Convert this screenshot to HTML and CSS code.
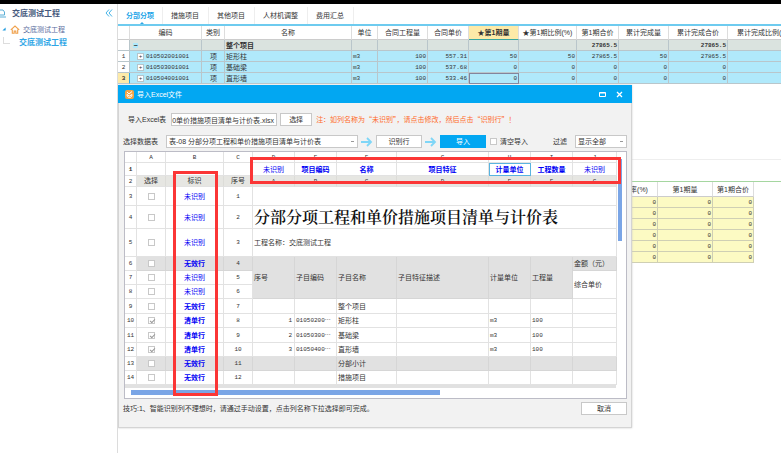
FILE: index.html
```html
<!DOCTYPE html>
<html lang="zh-CN">
<head>
    <meta charset="UTF-8">
    <meta name="viewport" content="width=device-width, initial-scale=1.0">
    <title>导入Excel文件</title>
    <link rel="stylesheet" href="styles.css">
</head>
<body>
    <div class="top-strip"></div>
    <div class="app">
        <aside class="sidebar">
            <div class="side-head">
                <svg class="side-icon" viewBox="0 0 8 9"><path d="M0 1h3l1.500 2v3H0M0 8h6" fill="none" stroke="#5aaed6"/></svg>
                <span class="side-title">交底测试工程</span>
                <button class="collapse" aria-label="收起"><svg viewBox="0 0 8 8"><path d="M4 0.500L1 4l3 3.500M7 0.500L4 4l3 3.500" fill="none" stroke="#45b4e8"/></svg></button>
            </div>
            <div class="side-row">
                <svg class="twisty" viewBox="0 0 5 5"><path d="M4.500 0.500v4h-4z" fill="#1e9be0"/></svg>
                <svg class="house" viewBox="0 0 10 9"><path d="M0.800 4.800L5 1l4.200 3.800M2.300 4.500v3.700h1.900V6h1.600v2.200h1.900V4.500" fill="none" stroke="#f0a04a" stroke-width="1.100"/></svg>
                <span>交底测试工程</span>
            </div>
            <div class="side-row leaf">
                <a href="#">交底测试工程</a>
            </div>
        </aside>

        <main class="main">
            <nav class="tabs">
                <button class="tab active">分部分项</button>
                <button class="tab">措施项目</button>
                <button class="tab">其他项目</button>
                <button class="tab">人材机调整</button>
                <button class="tab">费用汇总</button>
            </nav>

            <table class="bill">
                <colgroup>
                    <col class="w12"><col class="w72"><col class="w23"><col class="w127"><col class="w26"><col class="w50"><col class="w41"><col class="w50"><col class="w58"><col class="w42"><col class="w50"><col class="w59"><col class="w72">
                </colgroup>
                <thead>
                    <tr><th></th><th>编码</th><th>类别</th><th>名称</th><th>单位</th><th>合同工程量</th><th>合同单价</th><th class="current">★第1期量</th><th>★第1期比例(%)</th><th>第1期合价</th><th>累计完成量</th><th>累计完成合价</th><th>累计完成比例(%)</th></tr>
                </thead>
                <tbody>
                    <tr class="total"><td class="no"></td><td><span class="minus">−</span></td><td></td><td>整个项目</td><td></td><td></td><td></td><td></td><td></td><td class="num">27865.5</td><td></td><td class="num">27865.5</td><td></td></tr>
                    <tr><td class="no">1</td><td class="code"><span class="plus">+</span>010502001001</td><td class="kind">项</td><td>矩形柱</td><td class="unit">m3</td><td class="num">100</td><td class="num">557.31</td><td class="num">50</td><td class="num">50</td><td class="num">27865.5</td><td class="num">50</td><td class="num">27865.5</td><td></td></tr>
                    <tr><td class="no">2</td><td class="code"><span class="plus">+</span>010503001001</td><td class="kind">项</td><td>基础梁</td><td class="unit">m3</td><td class="num">100</td><td class="num">537.68</td><td class="num">0</td><td class="num">0</td><td class="num">0</td><td class="num">0</td><td class="num">0</td><td></td></tr>
                    <tr><td class="no here">3</td><td class="code"><span class="plus">+</span>010504001001</td><td class="kind">项</td><td>直形墙</td><td class="unit">m3</td><td class="num">100</td><td class="num">533.46</td><td class="num focus">0</td><td class="num">0</td><td class="num">0</td><td class="num">0</td><td class="num">0</td><td></td></tr>
                </tbody>
            </table>

            <section class="detail">
                <div class="detail-bar"></div>
                <table class="detail-table">
                    <colgroup><col><col class="w44"><col class="w55"><col class="w41"></colgroup>
                    <thead><tr><th></th><th>费率(%)</th><th>第1期量</th><th>第1期合价</th></tr></thead>
                    <tbody>
                        <tr><td></td><td>0</td><td>0</td><td>0</td></tr>
                        <tr><td></td><td>0</td><td>0</td><td>0</td></tr>
                        <tr><td></td><td>0</td><td>0</td><td>0</td></tr>
                        <tr><td></td><td>0</td><td>0</td><td>0</td></tr>
                        <tr><td></td><td>0</td><td>0</td><td>0</td></tr>
                        <tr><td></td><td>0</td><td>0</td><td>0</td></tr>
                    </tbody>
                </table>
            </section>

            <div class="dialog" role="dialog" aria-labelledby="dialog-title">
                <header class="title-bar">
                    <svg class="logo" viewBox="0 0 9 9"><rect width="9" height="9" rx="2" fill="#f5a545"/><path d="M2 2l2 2 3-2.500M2 4.500c0 4 5 4 5 0L4.500 6z" fill="none" stroke="#fff"/></svg>
                    <span id="dialog-title">导入Excel文件</span>
                    <button class="win-btn" aria-label="最大化"><svg viewBox="0 0 7 7"><path d="M0.500 1.500h6v4h-6zM0.500 2h6" fill="none" stroke="#fff"/></svg></button>
                    <button class="win-btn" aria-label="关闭"><svg viewBox="0 0 7 7"><path d="M1 1l5 5M6 1L1 6" fill="none" stroke="#fff" stroke-width="1.300"/></svg></button>
                </header>

                <div class="form-row file-row">
                    <label for="file">导入Excel表</label>
                    <input type="text" id="file" value="0单价措施项目清单与计价表.xlsx">
                    <button class="btn pick">选择</button>
                    <span class="note">注：如列名称为“未识别”，请点击修改，然后点击“识别行”！</span>
                </div>

                <div class="form-row sheet-row">
                    <label for="sheet">选择数据表</label>
                    <select id="sheet"><option>表-08 分部分项工程和单价措施项目清单与计价表</option></select>
                    <svg class="arrow" viewBox="0 0 12 10"><path d="M0 5h10M6 1l4 4-4 4" fill="none" stroke="#7fd6f7" stroke-width="1.800"/></svg>
                    <button class="btn">识别行</button>
                    <svg class="arrow" viewBox="0 0 12 10"><path d="M0 5h10M6 1l4 4-4 4" fill="none" stroke="#7fd6f7" stroke-width="1.800"/></svg>
                    <button class="btn primary">导入</button>
                    <input type="checkbox" id="clear"><label for="clear">清空导入</label>
                    <label class="filter-label" for="filter">过滤</label>
                    <select id="filter"><option>显示全部</option></select>
                </div>

                <div class="sheet-box">
                    <div class="sheet-view">
                        <table class="sheet">
                            <colgroup>
                                <col class="w12"><col class="w29"><col class="w58"><col class="w29"><col class="w42"><col class="w42"><col class="w60"><col class="w92"><col class="w42"><col class="w42"><col class="w44">
                            </colgroup>
                            <thead>
                                <tr class="h11"><th></th><th>A</th><th>B</th><th>C</th><th>D</th><th>E</th><th>F</th><th>G</th><th>H</th><th>I</th><th>J</th></tr>
                            </thead>
                            <tbody>
                                <tr class="h13 names"><th>1</th><td></td><td></td><td></td><td class="raw">未识别</td><td>项目编码</td><td>名称</td><td>项目特征</td><td class="picked">计量单位</td><td>工程数量</td><td class="raw">未识别</td></tr>
                                <tr class="h11 heads"><th>2</th><td>选择</td><td>标识</td><td>序号</td><td>A</td><td>B</td><td>C</td><td>D</td><td>E</td><td>F</td><td>G</td></tr>
                                <tr class="h19"><th>3</th><td><input type="checkbox" aria-label="第1行"></td><td class="mark raw">未识别</td><td class="seq">1</td><td colspan="7"></td></tr>
                                <tr class="h23"><th>4</th><td><input type="checkbox" aria-label="第2行"></td><td class="mark raw">未识别</td><td class="seq">2</td><td class="big" colspan="7">分部分项工程和单价措施项目清单与计价表</td></tr>
                                <tr class="h28"><th>5</th><td><input type="checkbox" aria-label="第3行"></td><td class="mark raw">未识别</td><td class="seq">3</td><td class="left" colspan="7">工程名称：交底测试工程</td></tr>
                                <tr class="h14"><th>6</th><td class="grey"><input type="checkbox" aria-label="第4行"></td><td class="mark grey">无效行</td><td class="seq grey">4</td><td class="left grey" rowspan="3">序号</td><td class="left grey" rowspan="3">子目编码</td><td class="left grey" rowspan="3">子目名称</td><td class="left grey" rowspan="3">子目特征描述</td><td class="left grey" rowspan="3">计量单位</td><td class="left grey" rowspan="3">工程量</td><td class="left grey">金额（元）</td></tr>
                                <tr class="h14"><th>7</th><td><input type="checkbox" aria-label="第5行"></td><td class="mark raw">未识别</td><td class="seq">5</td><td class="left" rowspan="2">综合单价</td></tr>
                                <tr class="h14"><th>8</th><td><input type="checkbox" aria-label="第6行"></td><td class="mark raw">未识别</td><td class="seq">6</td></tr>
                                <tr class="h15"><th>9</th><td><input type="checkbox" aria-label="第7行"></td><td class="mark">无效行</td><td class="seq">7</td><td></td><td></td><td class="left">整个项目</td><td></td><td></td><td></td><td></td></tr>
                                <tr class="h14"><th>10</th><td><input type="checkbox" checked aria-label="第8行"></td><td class="mark">清单行</td><td class="seq">8</td><td class="num">1</td><td class="cut">01050200⋯</td><td class="left">矩形柱</td><td></td><td class="val">m3</td><td class="val">100</td><td></td></tr>
                                <tr class="h15"><th>11</th><td><input type="checkbox" checked aria-label="第9行"></td><td class="mark">清单行</td><td class="seq">9</td><td class="num">2</td><td class="cut">01050300⋯</td><td class="left">基础梁</td><td></td><td class="val">m3</td><td class="val">100</td><td></td></tr>
                                <tr class="h14"><th>12</th><td><input type="checkbox" checked aria-label="第10行"></td><td class="mark">清单行</td><td class="seq">10</td><td class="num">3</td><td class="cut">01050400⋯</td><td class="left">直形墙</td><td></td><td class="val">m3</td><td class="val">100</td><td></td></tr>
                                <tr class="h14 shade"><th>13</th><td><input type="checkbox" aria-label="第11行"></td><td class="mark">无效行</td><td class="seq">11</td><td></td><td></td><td class="left">分部小计</td><td></td><td></td><td></td><td></td></tr>
                                <tr class="h14"><th>14</th><td><input type="checkbox" aria-label="第12行"></td><td class="mark">无效行</td><td class="seq">12</td><td></td><td></td><td class="left">措施项目</td><td></td><td></td><td></td><td></td></tr>
                            </tbody>
                        </table>
                        <div class="v-scroll"><div class="v-thumb"></div></div>
                    </div>
                    <div class="sliver"></div>
                    <div class="h-scroll"><div class="h-thumb"></div></div>
                    <div class="callout callout-names"></div>
                    <div class="callout callout-marks"></div>
                </div>

                <footer class="dialog-foot">
                    <span>技巧:1、智能识别列不理想时，请通过手动设置，点击列名称下拉选择即可完成。</span>
                    <button class="btn">取消</button>
                </footer>
            </div>
        </main>
    </div>
</body>
</html>
```
FILE: styles.css
```css
* {
    box-sizing: border-box;
}
body {
    margin: 0;
    min-height: 100vh;
    display: flex;
    flex-direction: column;
    overflow: hidden;
    font-family: "Liberation Sans", "Noto Sans CJK SC", sans-serif;
    font-size: 7px;
    line-height: 9px;
    color: #333;
    background: #fff;
}
button, input, select {
    font: inherit;
    color: inherit;
    margin: 0;
    padding: 0;
}
button {
    border: none;
    background: none;
    white-space: nowrap;
}
svg {
    display: block;
    flex: none;
}
.top-strip {
    height: 4px;
    background: #000;
}
.app {
    flex: 1;
    display: flex;
}

/* project tree */
.sidebar {
    width: 118px;
    flex: none;
    border-right: 1px solid #dcdcdc;
}
.side-head, .side-row {
    display: flex;
    align-items: center;
}
.side-head {
    height: 18px;
    padding-right: 4px;
    font-size: 8px;
    font-weight: bold;
    color: #46597d;
}
.side-icon {
    width: 8px;
    height: 9px;
    margin-right: 4px;
}
.collapse {
    margin-left: auto;
}
.collapse svg {
    width: 8px;
    height: 8px;
}
.side-row {
    height: 14px;
    padding-left: 2px;
    color: #586b9c;
}
.twisty {
    width: 4px;
    height: 4px;
    margin-right: 4px;
}
.house {
    width: 10px;
    height: 9px;
    margin-right: 3px;
}
.leaf {
    height: 13px;
    padding-left: 3px;
}
.leaf::before {
    content: "";
    width: 6px;
    height: 6px;
    margin: 0 9px 4px 0;
    border-left: 1px solid #ddd;
    border-bottom: 1px solid #ddd;
}
.leaf a {
    font-size: 8px;
    font-weight: bold;
    color: #2fa6e6;
    text-decoration: none;
}

/* main area */
.main {
    flex: 1;
    min-width: 0;
    position: relative;
    overflow: hidden;
}
.tabs {
    display: flex;
    height: 22px;
    padding-top: 3px;
    border-bottom: 2px solid #6ecbef;
}
.tab {
    padding: 0 9px 0 8px;
    border-right: 1px solid #eee;
}
.tab.active {
    position: relative;
    padding: 0 8px;
    color: #1ea5e8;
    font-weight: bold;
}
.tab.active::after {
    content: "";
    position: absolute;
    left: 50%;
    bottom: 0;
    border: 2px solid transparent;
    border-top: 0;
    border-bottom-color: #2fa6e6;
}
table {
    table-layout: fixed;
    border-spacing: 0;
    width: 0;
    white-space: nowrap;
}
th, td {
    padding: 0;
    overflow: hidden;
    line-height: 9px;
}
th {
    font-weight: normal;
}
.w12 { width: 12px; }
.w23 { width: 23px; }
.w26 { width: 26px; }
.w29 { width: 29px; }
.w41 { width: 41px; }
.w42 { width: 42px; }
.w44 { width: 44px; }
.w50 { width: 50px; }
.w55 { width: 55px; }
.w58 { width: 58px; }
.w59 { width: 59px; }
.w60 { width: 60px; }
.w72 { width: 72px; }
.w92 { width: 92px; }
.w127 { width: 127px; }

.bill th {
    height: 14px;
    border-right: 1px solid #ddd;
    border-bottom: 1px solid #ccc;
}
.bill th.current {
    background: #fdeaa8;
    border-bottom-color: #3aa7a0;
    font-weight: bold;
}
.bill td {
    height: 11px;
    padding-left: 1px;
    background: #b0e9fb;
    border-right: 1px solid #b9c6cb;
    border-bottom: 1px solid #b9c6cb;
}
.bill .total td {
    background: #dae3df;
    font-weight: bold;
}
.bill td.no, .bill .total td.no {
    padding: 0;
    background: #fff;
    text-align: center;
    font: 6px/9px "Liberation Mono", monospace;
}
.bill td.no.here {
    background: #fdeaa8;
    border-right-color: #2fa6e6;
    font-weight: bold;
}
.bill .num, .code, .unit {
    font: 6px/9px "Liberation Mono", monospace;
}
.bill .num {
    padding-right: 1px;
    text-align: right;
}
.bill .total .num {
    font-weight: bold;
}
.bill .kind {
    text-align: center;
}
.bill .focus {
    outline: 1px solid #84849c;
    outline-offset: -1px;
}
.plus, .minus {
    display: inline-block;
    width: 5px;
    height: 5px;
    line-height: 5px;
    text-align: center;
}
.plus {
    margin: 0 3px 0 7px;
    background: #fff;
    outline: 1px solid #b5c5cc;
}
.minus {
    margin-left: 2px;
    background: #b0e9fb;
}
.detail {
    padding-top: 75px;
}
.detail-bar {
    height: 23px;
    border-top: 1px solid #eee;
    border-bottom: 1px solid #a5d6a0;
}
.detail-table {
    width: 636px;
}
.detail-table th {
    height: 15px;
    border-right: 1px solid #ddd;
    border-bottom: 1px solid #ccc;
}
.detail-table td {
    height: 11px;
    padding-right: 1px;
    background: #fcfac3;
    border-right: 1px solid #cfcfb4;
    border-bottom: 1px solid #cfcfb4;
    text-align: right;
    font: 6px/9px "Liberation Mono", monospace;
}

/* import dialog */
.dialog {
    position: absolute;
    left: 0;
    top: 81px;
    width: 514px;
    background: #f2f2f2;
    border: 1px solid #d4d4d4;
    border-top: none;
    box-shadow: 0 0 2px #ccc;
}
.title-bar {
    display: flex;
    align-items: center;
    height: 18px;
    margin: 0 -1px;
    padding: 0 9px 0 7px;
    background: #02a7f2;
    color: #fff;
}
.logo {
    width: 9px;
    height: 9px;
    margin-right: 3px;
}
#dialog-title {
    margin-right: auto;
}
.win-btn {
    margin-left: 10px;
}
.win-btn svg {
    width: 7px;
    height: 7px;
}
.form-row {
    display: flex;
    align-items: center;
    height: 13px;
    margin: 0 4px;
    white-space: nowrap;
}
.file-row {
    margin-top: 10px;
    padding-left: 5px;
}
.sheet-row {
    margin-top: 9px;
}
#file {
    width: 106px;
    height: 13px;
    margin: 0 3px 0 5px;
    border: 1px solid #c8c8c8;
    background: #fff;
}
.btn {
    width: 46px;
    height: 13px;
    background: #fff;
    border: 1px solid #c8c8c8;
}
.pick {
    width: 32px;
}
.primary {
    background: #02a7f2;
    border-color: #02a7f2;
    color: #fff;
}
.note {
    margin-left: 4px;
    font-family: "Noto Sans CJK SC", sans-serif;
    color: #ff6a2a;
}
select {
    appearance: none;
    height: 13px;
    padding-left: 2px;
    border: 1px solid #c8c8c8;
    border-radius: 0;
    background: #fff linear-gradient(#999, #999) no-repeat right 3px center / 3px 1px;
}
#sheet {
    width: 192px;
    margin-left: 8px;
}
#filter {
    width: 52px;
    margin-left: 8px;
}
.arrow {
    width: 12px;
    height: 10px;
    margin: 0 3px;
}
input[type="checkbox"] {
    appearance: none;
    display: block;
    width: 7px;
    height: 7px;
    background: #fff;
    border: 1px solid #c8c8c8;
}
#clear {
    margin: 0 3px 0 4px;
}
.filter-label {
    margin-left: auto;
}

/* sheet preview */
.sheet-box {
    position: relative;
    margin: 3px 4px 0 5px;
    background: #fff;
    border: 1px solid #bcbcc6;
}
.sheet-view {
    display: flex;
}
.sheet th, .sheet td {
    text-align: center;
    border-right: 1px solid #e2e2e2;
    border-bottom: 1px solid #e2e2e2;
}
.sheet th, .sheet .heads td, .sheet .seq, .sheet .num, .sheet .cut, .sheet .val {
    font: 6px/9px "Liberation Mono", "Noto Sans CJK SC", monospace;
}
.sheet .heads td {
    background: #e6e6e2;
    border-right-color: #dcdcd8;
}
.sheet .heads td:nth-child(-n+4) {
    font-size: 7px;
}
.sheet .names th {
    font-weight: bold;
}
.names td, .mark {
    color: #0000f5;
    font-weight: bold;
}
.names td.raw, .mark.raw {
    font-weight: normal;
}
.names .picked {
    outline: 1px solid #5ab4e0;
    outline-offset: -1px;
}
.sheet .left, .sheet .big {
    padding-left: 1px;
    text-align: left;
}
.sheet .big {
    font: 600 16px/20px "Noto Serif CJK SC", "Noto Sans CJK SC", serif;
    color: #111;
}
.sheet .num {
    padding-right: 2px;
    text-align: right;
}
.sheet .cut, .sheet .val {
    padding-left: 1px;
    text-align: left;
}
.sheet .grey, .sheet .shade td {
    background: #e1e1e1;
    border-color: #d6d6d6;
}
.sheet td input[type="checkbox"] {
    margin: 0 auto;
}
.sheet td input:checked::before {
    content: "";
    display: block;
    width: 4px;
    height: 2px;
    margin: 1px 0 0 1px;
    border-left: 1px solid #999;
    border-bottom: 1px solid #999;
    transform: rotate(-45deg);
}
.h11 > * { height: 11px; }
.h13 > * { height: 13px; }
.h14 > * { height: 14px; }
.h15 > * { height: 15px; }
.h19 > * { height: 19px; }
.h23 > * { height: 23px; }
.h28 > * { height: 28px; }
.v-scroll {
    flex: 1;
    padding: 7px 4px 0 1px;
}
.v-thumb {
    height: 82px;
    background: #7aa5e6;
}
.sliver {
    height: 3px;
    margin-right: 10px;
    background: #e1e1e1;
}
.h-scroll {
    height: 10px;
    padding: 2px 186px 0 6px;
}
.h-thumb {
    height: 5px;
    background: #7aa5e6;
}
.callout {
    position: absolute;
    border: 3px solid #fb3636;
    pointer-events: none;
}
.callout-names {
    left: 125px;
    right: 5px;
    top: 5px;
    height: 27px;
}
.callout-marks {
    left: 48px;
    width: 45px;
    top: 19px;
    bottom: 2px;
}
.dialog-foot {
    display: flex;
    align-items: center;
    justify-content: space-between;
    height: 28px;
    padding: 0 4px 9px 4px;
}
```
